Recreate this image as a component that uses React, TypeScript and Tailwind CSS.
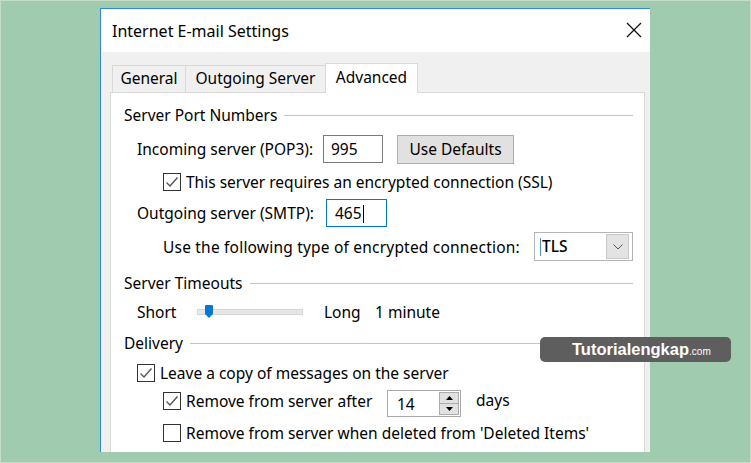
import React from "react";

const font = { fontFamily: '"Noto Sans", "Open Sans", sans-serif' };

function Check({ checked }: { checked: boolean }) {
  return (
    <div className="w-[18px] h-[18px] border border-[#333333] bg-white flex items-center justify-center shrink-0">
      {checked && (
        <svg width="14" height="14" viewBox="0 0 14 14">
          <path d="M1.5 7.5 L5 11 L12.5 2.5" fill="none" stroke="#555555" strokeWidth="1.4" />
        </svg>
      )}
    </div>
  );
}

function GroupHeader({ label }: { label: string }) {
  return (
    <div className="h-[22px] flex items-center pl-[13px] pr-[11px]">
      <span className="text-[15.5px] text-black leading-none pt-[2px]">{label}</span>
      <div className="flex-1 h-px bg-[#c4c4c4] ml-[7px] mt-[1px]" />
    </div>
  );
}

export default function App() {
  return (
    <div
      className="w-[751px] h-[463px] bg-[#a1cbae] border border-[#c5dccb] pl-[99px] pt-[7px] overflow-hidden relative"
      style={font}
    >
      <div className="w-[550px] h-[444px] border-t border-l border-[#2b8ae0] bg-[#f0f0f0] flex flex-col">
        {/* title bar */}
        <div className="h-[43px] bg-white flex items-center justify-between pl-[11px] pr-[8px] shrink-0">
          <span className="text-[16px] text-black leading-none">Internet E-mail Settings</span>
          <svg width="16" height="16" viewBox="0 0 16 16" className="-mt-[2px]">
            <path d="M1 1 L15 15 M15 1 L1 15" stroke="#111111" strokeWidth="1.3" />
          </svg>
        </div>
        {/* body */}
        <div className="flex-1 flex flex-col pl-[9px] pt-[11px] pr-[5px]">
          {/* tabs */}
          <div className="h-[29px] flex items-end pl-[2px] shrink-0 relative z-10">
            <div className="w-[74px] h-[27px] border border-b-0 border-[#d9d9d9] bg-[#f0f0f0] flex items-center justify-center text-[15.5px] text-black">
              General
            </div>
            <div className="w-[140px] h-[27px] border border-b-0 border-l-0 border-[#d9d9d9] bg-[#f0f0f0] flex items-center justify-center text-[15.5px] text-black">
              Outgoing Server
            </div>
            <div className="w-[93px] h-[30px] -mb-px -ml-px border border-b-0 border-[#d9d9d9] bg-white flex items-center justify-center text-[15.5px] text-black pb-[2px]">
              Advanced
            </div>
          </div>
          {/* panel */}
          <div className="flex-1 bg-white border border-b-0 border-[#d9d9d9] flex flex-col pt-[11px] text-[15.5px] text-black relative">
            <GroupHeader label="Server Port Numbers" />

            <div className="h-[28px] mt-[9px] flex items-center pl-[26px]">
              <span className="w-[186px] leading-none pt-[2px]">Incoming server (POP3):</span>
              <div className="w-[60px] h-[28px] border border-[#7a7a7a] flex items-center pl-[7px] pt-[2px]">995</div>
              <div className="ml-[14px] w-[117px] h-[29px] bg-[#e1e1e1] border border-[#adadad] flex items-center justify-center pt-[2px]">
                Use Defaults
              </div>
            </div>

            <div className="h-[20px] mt-[9px] flex items-center pl-[52px]">
              <Check checked />
              <span className="ml-[5px] leading-none pt-[2px]">This server requires an encrypted connection (SSL)</span>
            </div>

            <div className="h-[28px] mt-[7px] flex items-center pl-[26px]">
              <span className="w-[189px] leading-none pt-[2px]">Outgoing server (SMTP):</span>
              <div className="w-[61px] h-[28px] border border-[#0078d7] flex items-center pl-[8px] pt-px">
                465<span className="inline-block w-px h-[18px] bg-black ml-px" />
              </div>
            </div>

            <div className="h-[29px] mt-[5px] flex items-center pl-[52px]">
              <span className="w-[371px] leading-none tracking-[0.2px] pt-[2px]">Use the following type of encrypted connection:</span>
              <div className="w-[99px] h-[29px] border border-[#b4b4b4] flex items-center pl-[5px] pr-[3px]">
                <span className="inline-block w-px h-[18px] bg-[#4a90d9] mr-px" />
                <span className="flex-1 font-medium">TLS</span>
                <div className="w-[23px] h-[25px] bg-[#e3e3e3] border border-[#c9c9c9] flex items-center justify-center">
                  <svg width="10" height="6" viewBox="0 0 10 6">
                    <path d="M0.5 0.5 L5 5 L9.5 0.5" fill="none" stroke="#555555" strokeWidth="1" />
                  </svg>
                </div>
              </div>
            </div>

            <div className="mt-[11px]">
              <GroupHeader label="Server Timeouts" />
            </div>

            <div className="h-[22px] mt-[7px] flex items-center pl-[26px]">
              <span className="w-[60px] leading-none pt-[2px]">Short</span>
              <div className="w-[106px] h-[6px] bg-[#e7e7e7] border border-[#d6d6d6] relative">
                <svg width="8" height="13" viewBox="0 0 8 13" className="absolute left-[7px] -top-[5px]">
                  <path d="M1 0 H7 A1 1 0 0 1 8 1 V9 L4 13 L0 9 V1 A1 1 0 0 1 1 0 Z" fill="#0078d7" />
                </svg>
              </div>
              <span className="ml-[21px] w-[51px] leading-none pt-[2px]">Long</span>
              <span className="leading-none pt-[2px]">1 minute</span>
            </div>

            <div className="mt-[9px]">
              <GroupHeader label="Delivery" />
            </div>

            <div className="h-[20px] mt-[9px] flex items-center pl-[26px]">
              <Check checked />
              <span className="ml-[5px] leading-none pt-[2px]">Leave a copy of messages on the server</span>
            </div>

            <div className="h-[27px] mt-[7px] flex items-center pl-[52px]">
              <div className="-mt-[5px] flex items-center">
                <Check checked />
                <span className="ml-[5px] w-[201px] leading-none pt-[2px]">Remove from server after</span>
              </div>
              <div className="w-[74px] h-[27px] border border-[#a9a9a9] flex items-center pl-[9px] pr-[1px]">
                <span className="flex-1 pt-[2px]">14</span>
                <div className="w-[20px] h-[23px] flex flex-col">
                  <div className="flex-1 bg-[#e1e1e1] border border-[#adadad] flex items-center justify-center">
                    <svg width="7" height="4" viewBox="0 0 7 4"><path d="M0 4 L3.5 0 L7 4 Z" fill="#000" /></svg>
                  </div>
                  <div className="flex-1 bg-[#e1e1e1] border border-t-0 border-[#adadad] flex items-center justify-center">
                    <svg width="7" height="4" viewBox="0 0 7 4"><path d="M0 0 L3.5 4 L7 0 Z" fill="#000" /></svg>
                  </div>
                </div>
              </div>
              <span className="ml-[15px] leading-none -mt-[6px]">days</span>
            </div>

            <div className="h-[20px] mt-[6px] flex items-center pl-[52px]">
              <Check checked={false} />
              <span className="ml-[5px] leading-none pt-[2px]">Remove from server when deleted from 'Deleted Items'</span>
            </div>
          </div>
        </div>
      </div>

      {/* watermark */}
      <div
        className="absolute left-[539px] top-[336px] w-[191px] h-[25px] rounded-[5px] bg-[#5e5e5e] flex items-center pl-[32px]"
        style={{ fontFamily: '"Liberation Sans", Arial, sans-serif' }}
      >
        <span className="text-white font-bold text-[16.5px] leading-none">Tutorialengkap</span>
        <span className="text-white text-[10px] leading-none mt-[5px]">.com</span>
      </div>
    </div>
  );
}
